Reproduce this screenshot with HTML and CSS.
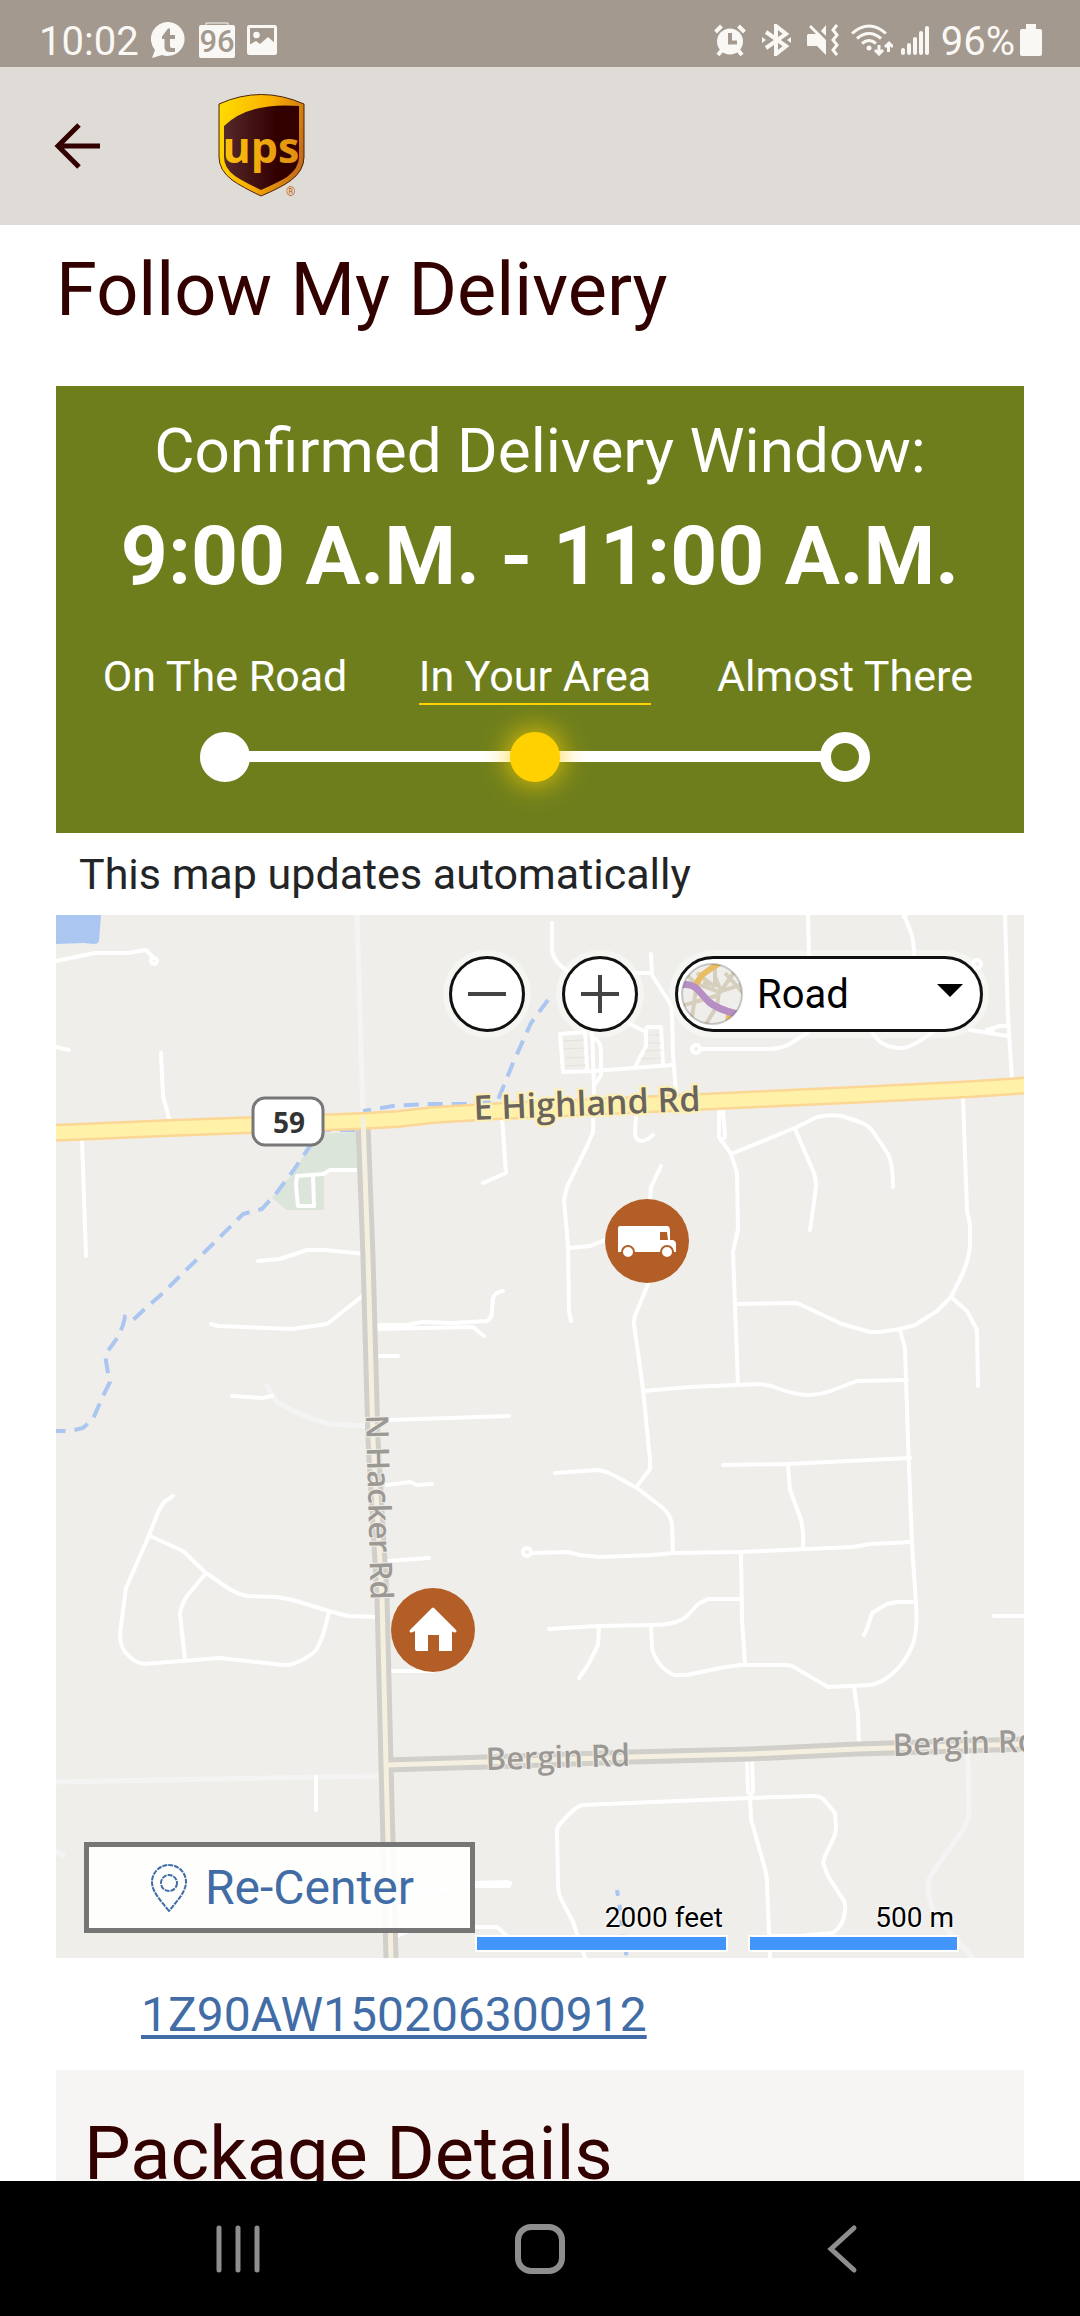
FILE: index.html
```html
<!DOCTYPE html>
<html lang="en">
<head>
  <meta charset="UTF-8">
  <title>Follow My Delivery</title>
  <meta name="viewport" content="width=device-width, initial-scale=1.0">
  <link rel="stylesheet" href="styles.css">
</head>
<body>
  <div class="status-bar">
    <div class="status-group status-left">
      <span class="clock">10:02</span>
      <svg width="36" height="36" viewBox="0 0 36 36">
        <path fill="#faf8f5" d="M18 0a17 17 0 1 1-7 33L1 36l3-8A17 17 0 0 1 18 0z"/>
        <path fill="#a3998e" d="M11 14.500l6-8h2v6.500h5v4h-5v7q0 2 2 2h3v4h-5q-5.500 0-5.500-5v-8h-2.500z"/>
      </svg>
      <svg width="36" height="36" viewBox="0 0 36 36">
        <path fill="none" stroke="#faf8f5" d="M7 3V1h22v2"/>
        <rect y="3" width="36" height="33" rx="2" fill="#faf8f5"/>
        <text x="18" y="30" class="calendar-day">96</text>
      </svg>
      <svg width="30" height="30" viewBox="0 0 30 30">
        <rect x="1.500" y="1.500" width="27" height="27" rx="1" fill="none" stroke="#faf8f5" stroke-width="3"/>
        <circle cx="9.500" cy="10" r="3.300" fill="#faf8f5"/>
        <path fill="#faf8f5" d="M2 20l7-4 4 3 8-7 8 7v9H2z"/>
      </svg>
    </div>
    <div class="status-group status-right">
      <svg class="icon-alarm" width="32" height="32" viewBox="0 0 32 32">
        <circle cx="16" cy="17.500" r="13" fill="#faf8f5"/>
        <path fill="none" stroke="#faf8f5" stroke-width="4" d="M1.500 8l6-6M30.500 8l-6-6M4 31l4-5M28 31l-4-5"/>
        <path fill="none" stroke="#a3998e" stroke-width="4" d="M16 9v9.500h7"/>
      </svg>
      <svg class="icon-bluetooth" width="29" height="32" viewBox="0 0 29 32">
        <path fill="none" stroke="#faf8f5" stroke-width="4" d="M4 8l20 14-10 8V2l10 8L4 24"/>
        <path fill="#faf8f5" d="M0 13l4 3-4 3zM29 13l-4 3 4 3z"/>
      </svg>
      <svg width="32" height="32" viewBox="0 0 32 32">
        <path fill="#faf8f5" d="M1 10h8L2 3l2-2 15 15v15l-9-9H1q-1 0-1-1V11zM14 7l5-6v11z"/>
        <path fill="none" stroke="#faf8f5" stroke-width="3" d="M30 1l-4 5 4 5-4 5 4 5-4 5 4 5"/>
      </svg>
      <svg class="icon-wifi" width="42" height="32" viewBox="0 0 42 32">
        <g fill="none" stroke="#faf8f5" stroke-width="3">
          <path d="M1 9.500q17-15 34 0M6 14.500q12-10 24 0M11 19.500q7-6 14 0"/>
          <path d="M28 21v9M24 26l4 4 4-4M37.500 28v-9M34 23l4-4 4 4"/>
        </g>
        <circle cx="18" cy="24" r="2.500" fill="#faf8f5"/>
      </svg>
      <svg width="28" height="32" viewBox="0 0 28 32">
        <path stroke="#faf8f5" stroke-width="4" stroke-linecap="round" d="M2 26v3M8 21v8M14 15v14M20 9v20M26 4v25"/>
      </svg>
      <span class="battery-level">96%</span>
      <svg width="22" height="32" viewBox="0 0 22 32">
        <path fill="#faf8f5" d="M6 0h10v5h4q2 0 2 2v23q0 2-2 2H2q-2 0-2-2V7q0-2 2-2h4z"/>
      </svg>
    </div>
  </div>

  <header class="app-bar">
    <button class="back-button" type="button" aria-label="Back">
      <svg width="46" height="46" viewBox="0 0 46 46">
        <path fill="none" stroke="#330000" stroke-width="5" d="M25 2L4 23l21 21M3 23h43"/>
      </svg>
    </button>
    <svg class="logo" width="88" height="106" viewBox="0 0 88 106" role="img" aria-label="UPS">
      <defs>
        <linearGradient id="gold" x1="0" x2="1" y1="0.300" y2="0.600">
          <stop offset="0" stop-color="#ffd900"/>
          <stop offset="0.500" stop-color="#f9b000"/>
          <stop offset="1" stop-color="#c46a1a"/>
        </linearGradient>
        <linearGradient id="brown">
          <stop offset="0" stop-color="#55282a"/>
          <stop offset="0.700" stop-color="#330000"/>
        </linearGradient>
        <linearGradient id="letters">
          <stop offset="0" stop-color="#ffc20a"/>
          <stop offset="1" stop-color="#e08f12"/>
        </linearGradient>
      </defs>
      <path fill="url(#gold)" stroke="#4a2208" d="M1 11Q43-8 86 11v53q0 14-14 24-8 6-29 15-19-9-29-16Q1 77 1 64z"/>
      <path fill="url(#brown)" d="M6 33Q31 9 81 13v51q0 11-12 20-8 5-26 13-17-8-26-14Q6 75 6 64z"/>
      <text x="43" y="70" class="logo-text">ups</text>
      <text x="68" y="103" class="logo-mark">®</text>
    </svg>
  </header>

  <main>
    <h1>Follow My Delivery</h1>

    <section class="delivery-window">
      <p class="window-title">Confirmed Delivery Window:</p>
      <p class="window-time">9:00 A.M. - 11:00 A.M.</p>
      <ol class="steps">
        <li class="step done"><span class="step-label">On The Road</span><span class="dot"></span></li>
        <li class="step current"><span class="step-label">In Your Area</span><span class="dot"></span></li>
        <li class="step"><span class="step-label">Almost There</span><span class="dot"></span></li>
      </ol>
    </section>

    <p class="map-note">This map updates automatically</p>

    <section class="map">
      <svg class="map-canvas" viewBox="0 0 968 1043" preserveAspectRatio="xMidYMid slice">
        <!-- water and park -->
        <path fill="#abc6f1" d="M0 0h45l-2 26q-1 3-5 3l-10-1-28 1z"/>
        <path fill="#dbe5da" d="M257 219l43-2 1 38-33 2v38h-37l-15-12 23-27 12-21z"/>

        <!-- unpaved roads -->
        <g class="road-faint">
          <path d="M301 0l6 199M211 471l10 16q20 13 53 22l35 2M0 867l160-3 162-3M0 937l7 3"/>
          <path d="M912 839l1 61-4 12-32 45q-6 9-5 18 2 15 9 29l36 39"/>
        </g>

        <!-- streets -->
        <g class="road">
          <path d="M0 46l39-8 33 0 18-3 6 6"/>
          <circle cx="98" cy="46" r="3"/>
          <path d="M0 132l13 3M105 138l2 43 7 26M26 224l4 117"/>
          <path d="M307 255h-33l-7 4-26 2-1 10 2 20h16l-1-30"/>
          <path d="M202 346l22-2 27-9h18l40 4M155 409l7 2 74 3 35-5 38-30"/>
          <path d="M317 410h34l15-3 31 1 34-2q5-3 5-10l1-13q2-6 10-7M317 414l100-2 11 9M317 441h25"/>
          <path d="M176 481l31 2 9-2M333 505l120-4M446 203l4 55-23 10"/>
          <path d="M496 8v27q1 12 18 23h80M595 39l1 21 16 25q4 6 4 14l1 40 3 39"/>
          <path d="M752 0l1 42M848 0l6 15q4 8 4 27M848 2l6-6M949 0l3 103 4 61M914 115l38 6M931 115l13-4h8M937 118v-5"/>
          <circle cx="921" cy="49" r="4"/>
          <circle cx="640" cy="134" r="4"/>
          <path d="M646 134h65q12 0 21-4l19-12M817 118q8 15 29 15 9 0 31-16"/>
          <path d="M504 119l3 38 30-1 80-6M504 119l25-2 2 38M536 114l2 57-1 46-6 14-20 41-3 13 4 46 1 65 2 10"/>
          <path d="M536 122q9 4 9 13v25l-7 11M572 108l18 9 1-5h14l2 38M590 117v14l-10 19"/>
          <path d="M580 201l-1 16q0 9 7 9 4 0 11-6M605 251l-10 21-1 13M513 333l21-2 15-6"/>
          <path d="M592 369l-11 27q-3 5-3 13l9 65 7 71v9l-13 17"/>
          <path d="M665 194q-2 2-2 8v20l12 17 6 19 1 56-5 23 2 52 3 80M667 196l2 26-4 4"/>
          <path d="M675 239l66-27 20-10q12-3 25-1l15 5q8 2 15 9l16 24q5 10 5 33M739 214l19 44q2 6 2 13l-2 16-4 28"/>
          <path d="M907 181l4 116q3 8 3 18v16q-1 12-7 27l-12 24-14 14-22 14-15 4-20 3h-10l-28-8-45-21-60 1"/>
          <path d="M895 382l16 14 10 19 1 56M844 415l5 18 3 92 4 104 4 60q2 24-3 40-7 18-21 30-10 9-22 11l-42 2-36-21q-4-1-12-1h-40l-20 3-33 7h-13q-16-7-22-26l-1-23"/>
          <path d="M587 476l47-4 70-3q10 1 17 4 15 6 30 7 14 0 26-5l24-9 50-1"/>
          <path d="M667 550l64-1 123-6M732 550l2 25 10 27q4 12 3 30"/>
          <circle cx="471" cy="637" r="4"/>
          <path d="M476 638l35-1 13 3 20 2 53-2 20-2 67-1 113-5 17-3 42-2"/>
          <path d="M499 558l43-3q8 1 17 6l22 12 26 20q9 8 9 19l1 25M685 638l1 66 3 45"/>
          <path d="M493 714l48-3 55-1q25 0 35-9l11-12 10-5h34M543 712l-1 18-10 20-9 13"/>
          <path d="M859 687h-18l-10 2-15 9-4 13-4 9M938 701h30M798 772l4 28 1 32"/>
          <path d="M691 841l1 36 3 3 2-3-1-36M694 882l1 22 14 50q2 7 2 14l3 75"/>
          <path d="M526 890l168-7 62-2q10 0 13 5l10 12 1 14-1 8-10 21-2 7 5 13 16 25q2 5 1 10-1 14-12 22l-33 3h-30"/>
          <path d="M526 890q-9 3-22 19-3 3-3 7l1 52q0 10 3 16l12 23 12 36"/>
          <path d="M117 581l-9 6q-5 7-7 13l-9 23-22 50-6 45q0 16 8 22 6 7 15 9l77-6 63 7q8 0 12-2 14-5 22-14l6-14 6-23"/>
          <path d="M94 621l33 15 23 22 19 13q13 9 23 10l29 1 16 3 36 11 19 5 30 1M150 658l-19 23q-6 9-7 18l5 46"/>
          <path d="M260 862v33M331 570l23-3 7 3 15-1M331 646l42-3M331 756h46"/>
          <path d="M337 989l30-12 52-6 34 0 1-3-3-1-32 1M337 1023q20-11 40-11h64l10 9"/>
        </g>

        <g class="parking">
          <path d="M508 126l20-1M508 134l21-1M509 143l20-1M509 151l21-1M593 120h11M592 128h13M589 136l17-1M585 144l21-1"/>
        </g>

        <!-- creeks -->
        <path class="creek" d="M492 85l-17 23-18 40-15 37-25 4h-46l-34 2-30 5M299 215h-30l-15 16-17 25-15 20-16 18-19 5-23 23-37 36-20 20-16 14-15 14-7-4-2 8-5 12-13 18 3 18 2 9-7 14-10 23-10 9-13 3H0"/>
        <path class="creek creek-small" d="M561 975l3 18 3 28 4 22"/>

        <!-- main roads -->
        <path class="avenue-edge" d="M307 210l5 132 5 183 9 157 4 168 5 193M330 850l101-3 143-5 120-3 107-5 167-5"/>
        <path class="highway-edge" d="M-9 218l123-5 83-3 110-4 35-2 35-4 67-4 263-12 110-5 100-5 60-4"/>
        <path class="highway" d="M-9 218l123-5 83-3 110-4 35-2 35-4 67-4 263-12 110-5 100-5 60-4"/>
        <path class="avenue" d="M307 202l5 140 5 183 9 157 4 168 5 193M330 850l101-3 143-5 120-3 107-5 167-5"/>

        <rect class="shield" x="197" y="183" width="70" height="47" rx="12"/>
        <text class="shield-number" x="233" y="218">59</text>

        <text class="label-highway" transform="translate(418 205) rotate(-2.300)">E Highland Rd</text>
        <text class="label-street" transform="translate(310 500) rotate(88.500)">N Hacker Rd</text>
        <text class="label-street" transform="translate(430 855) rotate(-1.600)">Bergin Rd</text>
        <text class="label-street" transform="translate(837 841) rotate(-1.800)">Bergin Rd</text>

        <!-- delivery truck -->
        <g transform="translate(591 326)">
          <circle r="42" fill="#b25e26"/>
          <path fill="#fff" d="M-29-13q0-2 2-2h47q3 0 3 5v9h3q3 1 3 4v8h-58z"/>
          <path fill="#b25e26" d="M13-9h7l1 8h-8z"/>
          <g fill="#fff" stroke="#b25e26" stroke-width="2">
            <circle cx="-19" cy="11" r="6"/>
            <circle cx="20" cy="11" r="6"/>
          </g>
        </g>

        <!-- home -->
        <g transform="translate(377 715)">
          <circle r="42" fill="#b25e26"/>
          <path fill="#fff" stroke="#fff" stroke-width="3" stroke-linecap="round" stroke-linejoin="round" d="M-22 1L0-21 22 1l-5-2H-17z"/>
          <path fill="#fff" d="M-18-3h37v24H6V5H-5v16h-11q-2 0-2-2z"/>
        </g>
      </svg>

      <div class="map-controls">
        <button class="zoom-button" type="button" aria-label="Zoom out">
          <svg width="38" height="38" viewBox="0 0 38 38"><path stroke="#444" stroke-width="4" d="M0 19h38"/></svg>
        </button>
        <button class="zoom-button" type="button" aria-label="Zoom in">
          <svg width="38" height="38" viewBox="0 0 38 38"><path stroke="#444" stroke-width="4" d="M0 19h38M19 0v38"/></svg>
        </button>
        <div class="map-type">
          <select aria-label="Map type">
            <option>Road</option>
            <option>Aerial</option>
          </select>
          <svg class="map-type-icon" width="62" height="62" viewBox="0 0 62 62">
            <clipPath id="round"><circle cx="31" cy="31" r="30"/></clipPath>
            <g clip-path="url(#round)" fill="none">
              <path fill="#f0eeea" d="M0 0h62v62H0z"/>
              <path stroke="#d6cfbd" stroke-width="4" d="M4 10l10 10 24 9 24-8M16 20l-6 41M0 43l38-11M38 29l-2 14-11 18M34 0v22L22 20M34 14l6 14 14-20M44 10l18 20M16 10l18 14"/>
              <path stroke="#e9bd66" stroke-width="6" d="M39 0q-7 4-18 12l-6 9M47 62l1-10"/>
              <path stroke="#b78fc4" stroke-width="7" d="M-2 22q12-2 18 4l12 13q8 7 28 12"/>
            </g>
            <circle cx="31" cy="31" r="30" fill="none" stroke="#000" stroke-opacity="0.200" stroke-width="2"/>
          </svg>
          <svg class="map-type-arrow" width="26" height="13" viewBox="0 0 26 13"><path d="M0 0h26L13 13z"/></svg>
        </div>
      </div>

      <button class="recenter" type="button">
        <svg width="36" height="48" viewBox="0 0 36 48">
          <g fill="none" stroke="#426ca5" stroke-width="2" stroke-dasharray="5 1">
            <path d="M18 47C10 37 1 28 1 18a17 17 0 0 1 34 0c0 10-9 19-17 29z"/>
            <circle cx="18" cy="19" r="8"/>
          </g>
        </svg>
        Re-Center
      </button>

      <div class="scale">
        <span class="scale-bar scale-feet">2000 feet</span>
        <span class="scale-bar scale-meters">500 m</span>
      </div>
    </section>

    <p class="tracking"><a href="#package">1Z90AW150206300912</a></p>

    <section class="package" id="package">
      <h2>Package Details</h2>
    </section>
  </main>

  <nav class="system-nav">
    <button type="button" aria-label="Recent apps">
      <svg width="50" height="50" viewBox="0 0 50 50"><path stroke="#8e8e8e" stroke-width="5" stroke-linecap="round" d="M6 4v42M25 4v42M44 4v42"/></svg>
    </button>
    <button type="button" aria-label="Home">
      <svg width="50" height="50" viewBox="0 0 50 50"><rect x="3" y="3" width="44" height="44" rx="13" fill="none" stroke="#8e8e8e" stroke-width="6"/></svg>
    </button>
    <button type="button" aria-label="Back">
      <svg width="50" height="50" viewBox="0 0 50 50"><path fill="none" stroke="#8e8e8e" stroke-width="5" stroke-linecap="round" d="M37 4L14 25l23 21"/></svg>
    </button>
  </nav>
</body>
</html>
```

FILE: styles.css
```css
:root {
  --brown: #330000;
  --green: #6e7e1c;
  --yellow: #ffd100;
  --link: #426ca5;
  --status: #a3998e;
  --map: #efeeea;
}

* {
  box-sizing: border-box;
}

body {
  margin: 0;
  height: 100vh;
  display: flex;
  flex-direction: column;
  font-family: Roboto, sans-serif;
  background: #fff;
  color: #222426;
}

h1, h2, p, ol {
  margin: 0;
  padding: 0;
  font-weight: 400;
}

button {
  padding: 0;
  border: none;
  background: none;
  font-family: inherit;
  cursor: pointer;
}

svg {
  display: block;
  flex: none;
}

/* status bar */
.status-bar {
  height: 67px;
  padding: 12px 38px 0 39px;
  display: flex;
  justify-content: space-between;
  align-items: center;
  background: var(--status);
  color: #faf8f5;
  font-size: 40px;
  line-height: 48px;
}

.status-group {
  display: flex;
  align-items: center;
  gap: 12px;
}

.icon-alarm, .icon-bluetooth {
  margin-right: 4px;
}

.icon-wifi {
  margin-right: -4px;
}

.clock, .battery-level {
  padding-top: 4px;
}

.battery-level {
  margin-right: -7px;
}

.calendar-day {
  font-size: 31px;
  font-weight: 500;
  text-anchor: middle;
  fill: var(--status);
}

/* app bar */
.app-bar {
  height: 158px;
  padding: 0 54px;
  display: flex;
  align-items: center;
  gap: 118px;
  background: #dfdcd7;
}

.logo-text {
  font-family: "Open Sans", sans-serif;
  font-size: 43px;
  font-weight: 700;
  text-anchor: middle;
  fill: url(#letters);
}

.logo-mark {
  font-size: 12px;
  fill: #c46a1a;
}

main {
  flex: 1;
  min-height: 0;
  padding: 25px 56px 0;
  overflow: hidden;
}

h1, h2 {
  font-size: 74px;
  line-height: 80px;
  color: var(--brown);
}

/* delivery window */
.delivery-window {
  margin-top: 56px;
  padding: 29px 24px 51px 14px;
  background: var(--green);
  color: #fff;
  text-align: center;
}

.window-title {
  padding-left: 10px;
  font-size: 62px;
  line-height: 72px;
}

.window-time {
  margin-top: 21px;
  padding-left: 10px;
  font-size: 82px;
  font-weight: 700;
  line-height: 96px;
}

.steps {
  margin-top: 48px;
  display: grid;
  grid-template-columns: repeat(3, 1fr);
  list-style: none;
}

.step {
  position: relative;
  display: flex;
  flex-direction: column;
  align-items: center;
  gap: 27px;
}

.step-label {
  border-bottom: 2px solid transparent;
  padding-bottom: 3px;
  font-size: 43px;
  line-height: 48px;
  white-space: nowrap;
}

.current .step-label {
  border-color: var(--yellow);
}

.dot {
  width: 50px;
  height: 50px;
  border: 11px solid #fff;
  border-radius: 50%;
  background: var(--green);
  position: relative;
  z-index: 1;
}

.done .dot {
  background: #fff;
}

.current .dot {
  border-color: var(--yellow);
  background: var(--yellow);
  box-shadow: 0 0 30px var(--yellow);
}

/* line to the next step */
.step:not(:last-child)::after {
  content: "";
  position: absolute;
  left: calc(50% + 20px);
  right: calc(-50% + 20px);
  bottom: 20px;
  height: 11px;
  background: #fff;
}

.map-note {
  margin: 17px 0;
  padding-left: 23px;
  font-size: 43px;
  line-height: 48px;
}

/* map */
.map {
  position: relative;
  aspect-ratio: 968 / 1043;
  background: var(--map);
  overflow: hidden;
}

.map-canvas {
  width: 100%;
  height: 100%;
}

.road, .road-faint {
  fill: none;
  stroke: #fff;
  stroke-width: 4;
  stroke-linecap: round;
  stroke-linejoin: round;
}

.road-faint {
  stroke: #f5f4f4;
  stroke-width: 5;
}

.parking {
  stroke: #e9e1d8;
}

.creek {
  fill: none;
  stroke: #abc6f0;
  stroke-width: 4;
  stroke-dasharray: 15 9;
}

.creek-small {
  stroke-dasharray: 6 9;
}

.avenue, .avenue-edge, .highway, .highway-edge {
  fill: none;
  stroke-linejoin: round;
}

.avenue-edge {
  stroke: #d0cfc9;
  stroke-width: 15;
}

.avenue {
  stroke: #f5efdf;
  stroke-width: 5;
}

.highway-edge {
  stroke: #fbd694;
  stroke-width: 18;
}

.highway {
  stroke: #fff2a8;
  stroke-width: 13;
}

.shield {
  fill: #fff;
  stroke: #777;
  stroke-width: 3;
}

.shield-number {
  font-family: "Noto Sans", sans-serif;
  font-size: 28px;
  font-weight: 700;
  text-anchor: middle;
  fill: #333;
}

.label-highway, .label-street {
  font-family: "Open Sans", sans-serif;
  font-size: 34px;
  font-weight: 600;
  fill: #6a645c;
  stroke: #fdf0b4;
  stroke-width: 4;
  paint-order: stroke;
}

.label-street {
  font-size: 31px;
  fill: #9c9894;
  stroke: #efeeea;
  stroke-width: 2;
}

.map-controls {
  position: absolute;
  top: 41px;
  right: 41px;
  display: flex;
  gap: 37px;
}

.zoom-button, .map-type select {
  height: 76px;
  border: 3px solid #111;
  border-radius: 38px;
  background: #fff;
  box-shadow: 0 0 0 6px rgba(255, 255, 255, 0.4);
}

.zoom-button {
  width: 76px;
  display: flex;
  align-items: center;
  justify-content: center;
}

.map-type {
  position: relative;
}

.map-type select {
  width: 308px;
  padding: 0 60px 0 79px;
  appearance: none;
  font-family: inherit;
  font-size: 40px;
  color: #000;
}

.map-type-icon {
  position: absolute;
  left: 6px;
  top: 7px;
  pointer-events: none;
}

.map-type-arrow {
  position: absolute;
  right: 20px;
  top: 28px;
  pointer-events: none;
}

.recenter {
  position: absolute;
  left: 28px;
  bottom: 25px;
  width: 391px;
  height: 91px;
  padding-left: 6px;
  display: flex;
  align-items: center;
  justify-content: center;
  gap: 18px;
  border: 5px solid #767676;
  background: rgba(255, 255, 255, 0.9);
  color: var(--link);
  font-size: 48px;
}

.scale {
  position: absolute;
  right: 65px;
  bottom: 6px;
  display: flex;
  gap: 20px;
  color: #000;
  font-size: 28px;
  line-height: 34px;
  text-align: right;
  text-shadow: 1px 1px 0 #fff, -1px -1px 0 #fff;
}

.scale-bar {
  padding-right: 5px;
}

.scale-bar::after {
  content: "";
  display: block;
  height: 13px;
  margin-right: -5px;
  border: 2px solid #fff;
  background: #4296fb;
}

.scale-feet {
  width: 253px;
}

.scale-meters {
  width: 211px;
}

/* tracking number */
.tracking {
  margin: 29px 0 27px;
  padding-left: 85px;
  font-size: 48px;
  line-height: 56px;
}

.tracking a {
  color: var(--link);
  text-decoration: underline;
  text-decoration-thickness: 4px;
  text-underline-offset: 4px;
  text-decoration-skip-ink: none;
}

.package {
  padding: 44px 28px 40px;
  background: #f7f5f4;
}

/* system navigation */
.system-nav {
  height: 135px;
  padding: 0 87px;
  display: grid;
  grid-template-columns: repeat(3, 1fr);
  background: #000;
}

.system-nav button {
  display: flex;
  align-items: center;
  justify-content: center;
}
```
